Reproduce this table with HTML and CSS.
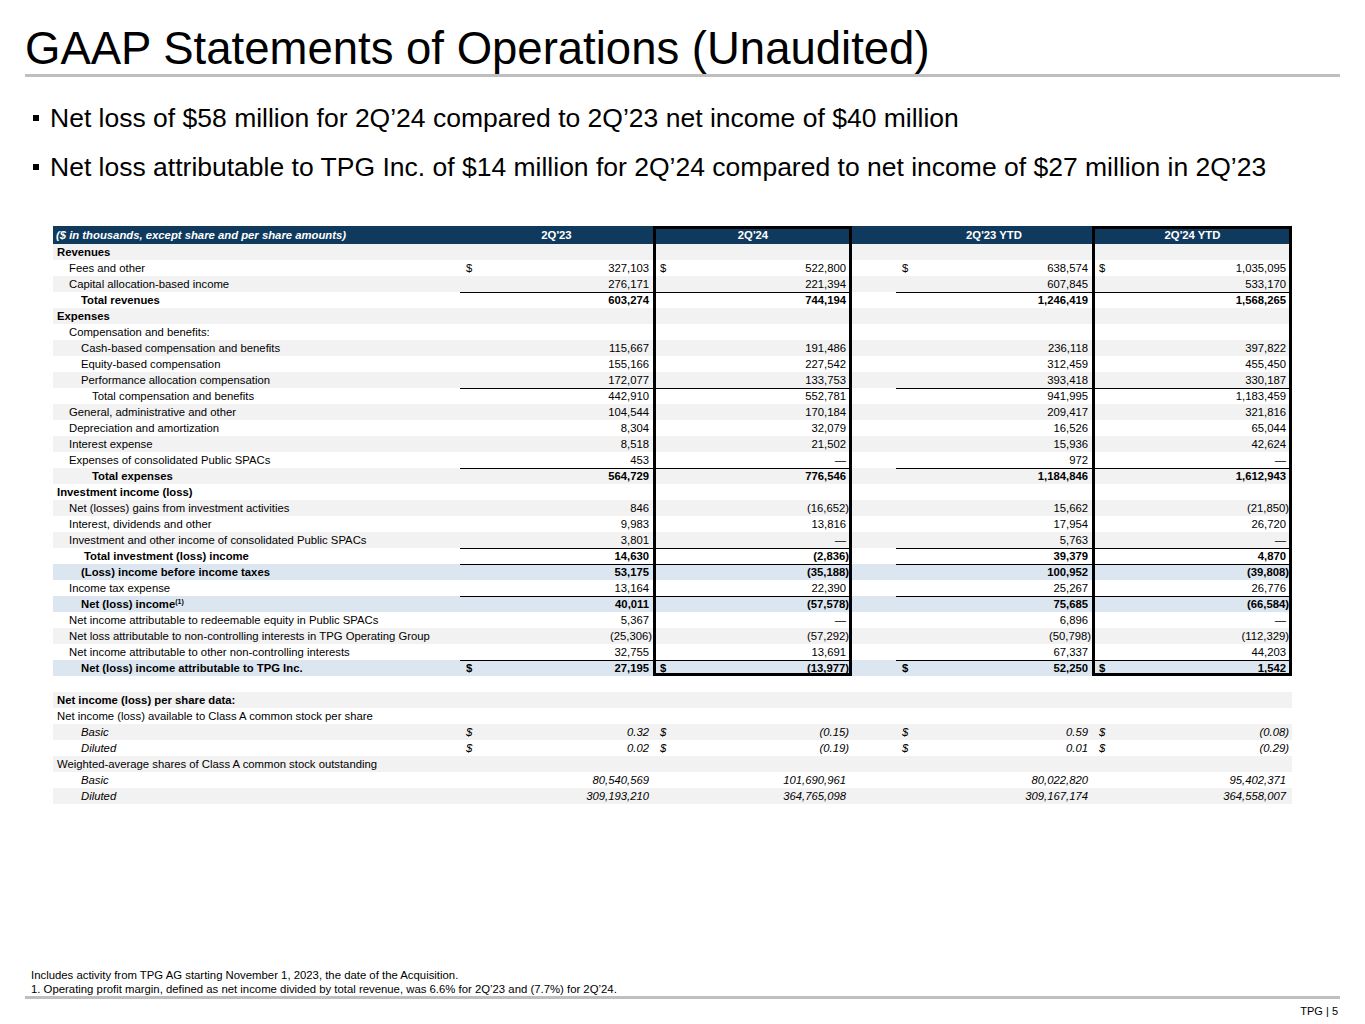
FILE: index.html
```html
<!DOCTYPE html>
<html lang="en">
<head>
<meta charset="utf-8">
<title>GAAP Statements of Operations (Unaudited)</title>
<link rel="stylesheet" href="styles.css">
</head>
<body>
<div class="slide">
  <h1 class="title">GAAP Statements of Operations (Unaudited)</h1>
  <div class="rule"></div>
  <ul class="bullets">
    <li>Net loss of $58 million for 2Q’24 compared to 2Q’23 net income of $40 million</li>
    <li>Net loss attributable to TPG Inc. of $14 million for 2Q’24 compared to net income of $27 million in 2Q’23</li>
  </ul>

  <table class="fin">
    <colgroup>
      <col class="w-label"><col class="w-c1"><col class="w-box"><col class="w-gap"><col class="w-c3"><col class="w-box2">
    </colgroup>
    <thead>
      <tr class="hd">
        <th class="hl">($ in thousands, except share and per share amounts)</th>
        <th class="hv">2Q'23</th>
        <th class="hv k">2Q'24</th>
        <th class="hv"></th>
        <th class="hv">2Q'23 YTD</th>
        <th class="hv k">2Q'24 YTD</th>
      </tr>
    </thead>
    <tbody>
      <tr class="g"><td class="l i0 b">Revenues</td><td class="v"></td><td class="v k"></td><td></td><td class="v"></td><td class="v k"></td></tr>
      <tr><td class="l i1">Fees and other</td><td class="v"><span class="c">$</span>327,103</td><td class="v k"><span class="c">$</span>522,800</td><td></td><td class="v"><span class="c">$</span>638,574</td><td class="v k"><span class="c">$</span>1,035,095</td></tr>
      <tr class="g"><td class="l i1">Capital allocation-based income</td><td class="v">276,171</td><td class="v k">221,394</td><td></td><td class="v">607,845</td><td class="v k">533,170</td></tr>
      <tr class="r b"><td class="l i2">Total revenues</td><td class="v">603,274</td><td class="v k">744,194</td><td></td><td class="v">1,246,419</td><td class="v k">1,568,265</td></tr>
      <tr class="g"><td class="l i0 b">Expenses</td><td class="v"></td><td class="v k"></td><td></td><td class="v"></td><td class="v k"></td></tr>
      <tr><td class="l i1">Compensation and benefits:</td><td class="v"></td><td class="v k"></td><td></td><td class="v"></td><td class="v k"></td></tr>
      <tr class="g"><td class="l i2">Cash-based compensation and benefits</td><td class="v">115,667</td><td class="v k">191,486</td><td></td><td class="v">236,118</td><td class="v k">397,822</td></tr>
      <tr><td class="l i2">Equity-based compensation</td><td class="v">155,166</td><td class="v k">227,542</td><td></td><td class="v">312,459</td><td class="v k">455,450</td></tr>
      <tr class="g"><td class="l i2">Performance allocation compensation</td><td class="v">172,077</td><td class="v k">133,753</td><td></td><td class="v">393,418</td><td class="v k">330,187</td></tr>
      <tr class="r"><td class="l i3">Total compensation and benefits</td><td class="v">442,910</td><td class="v k">552,781</td><td></td><td class="v">941,995</td><td class="v k">1,183,459</td></tr>
      <tr class="g"><td class="l i1">General, administrative and other</td><td class="v">104,544</td><td class="v k">170,184</td><td></td><td class="v">209,417</td><td class="v k">321,816</td></tr>
      <tr><td class="l i1">Depreciation and amortization</td><td class="v">8,304</td><td class="v k">32,079</td><td></td><td class="v">16,526</td><td class="v k">65,044</td></tr>
      <tr class="g"><td class="l i1">Interest expense</td><td class="v">8,518</td><td class="v k">21,502</td><td></td><td class="v">15,936</td><td class="v k">42,624</td></tr>
      <tr><td class="l i1">Expenses of consolidated Public SPACs</td><td class="v">453</td><td class="v k">—</td><td></td><td class="v">972</td><td class="v k">—</td></tr>
      <tr class="g r b"><td class="l i3">Total expenses</td><td class="v">564,729</td><td class="v k">776,546</td><td></td><td class="v">1,184,846</td><td class="v k">1,612,943</td></tr>
      <tr><td class="l i0 b">Investment income (loss)</td><td class="v"></td><td class="v k"></td><td></td><td class="v"></td><td class="v k"></td></tr>
      <tr class="g"><td class="l i1">Net (losses) gains from investment activities</td><td class="v">846</td><td class="v k"><span class="n">(16,652)</span></td><td></td><td class="v">15,662</td><td class="v k"><span class="n">(21,850)</span></td></tr>
      <tr><td class="l i1">Interest, dividends and other</td><td class="v">9,983</td><td class="v k">13,816</td><td></td><td class="v">17,954</td><td class="v k">26,720</td></tr>
      <tr class="g"><td class="l i1">Investment and other income of consolidated Public SPACs</td><td class="v">3,801</td><td class="v k">—</td><td></td><td class="v">5,763</td><td class="v k">—</td></tr>
      <tr class="r b"><td class="l i2b">Total investment (loss) income</td><td class="v">14,630</td><td class="v k"><span class="n">(2,836)</span></td><td></td><td class="v">39,379</td><td class="v k">4,870</td></tr>
      <tr class="hi r b"><td class="l i2">(Loss) income before income taxes</td><td class="v">53,175</td><td class="v k"><span class="n">(35,188)</span></td><td></td><td class="v">100,952</td><td class="v k"><span class="n">(39,808)</span></td></tr>
      <tr><td class="l i1">Income tax expense</td><td class="v">13,164</td><td class="v k">22,390</td><td></td><td class="v">25,267</td><td class="v k">26,776</td></tr>
      <tr class="hi r b"><td class="l i2">Net (loss) income<sup class="fn">(1)</sup></td><td class="v">40,011</td><td class="v k"><span class="n">(57,578)</span></td><td></td><td class="v">75,685</td><td class="v k"><span class="n">(66,584)</span></td></tr>
      <tr><td class="l i1">Net income attributable to redeemable equity in Public SPACs</td><td class="v">5,367</td><td class="v k">—</td><td></td><td class="v">6,896</td><td class="v k">—</td></tr>
      <tr class="g"><td class="l i1">Net loss attributable to non-controlling interests in TPG Operating Group</td><td class="v"><span class="n">(25,306)</span></td><td class="v k"><span class="n">(57,292)</span></td><td></td><td class="v"><span class="n">(50,798)</span></td><td class="v k"><span class="n">(112,329)</span></td></tr>
      <tr><td class="l i1">Net income attributable to other non-controlling interests</td><td class="v">32,755</td><td class="v k">13,691</td><td></td><td class="v">67,337</td><td class="v k">44,203</td></tr>
      <tr class="hi r b last"><td class="l i2">Net (loss) income attributable to TPG Inc.</td><td class="v"><span class="c">$</span>27,195</td><td class="v k"><span class="c">$</span><span class="n">(13,977)</span></td><td></td><td class="v"><span class="c">$</span>52,250</td><td class="v k"><span class="c">$</span>1,542</td></tr>
      <tr><td class="l"></td><td class="v"></td><td class="v q"></td><td></td><td class="v"></td><td class="v q"></td></tr>
      <tr class="g"><td class="l i0 b">Net income (loss) per share data:</td><td class="v"></td><td class="v q"></td><td></td><td class="v"></td><td class="v q"></td></tr>
      <tr><td class="l i0">Net income (loss) available to Class A common stock per share</td><td class="v"></td><td class="v q"></td><td></td><td class="v"></td><td class="v q"></td></tr>
      <tr class="g it"><td class="l i2">Basic</td><td class="v"><span class="c">$</span>0.32</td><td class="v q"><span class="c">$</span><span class="n">(0.15)</span></td><td></td><td class="v"><span class="c">$</span>0.59</td><td class="v q"><span class="c">$</span><span class="n">(0.08)</span></td></tr>
      <tr class="it"><td class="l i2">Diluted</td><td class="v"><span class="c">$</span>0.02</td><td class="v q"><span class="c">$</span><span class="n">(0.19)</span></td><td></td><td class="v"><span class="c">$</span>0.01</td><td class="v q"><span class="c">$</span><span class="n">(0.29)</span></td></tr>
      <tr class="g"><td class="l i0">Weighted-average shares of Class A common stock outstanding</td><td class="v"></td><td class="v q"></td><td></td><td class="v"></td><td class="v q"></td></tr>
      <tr class="it"><td class="l i2">Basic</td><td class="v">80,540,569</td><td class="v q">101,690,961</td><td></td><td class="v">80,022,820</td><td class="v q">95,402,371</td></tr>
      <tr class="g it"><td class="l i2">Diluted</td><td class="v">309,193,210</td><td class="v q">364,765,098</td><td></td><td class="v">309,167,174</td><td class="v q">364,558,007</td></tr>
    </tbody>
  </table>

  <div class="foot">
    <p class="notes">Includes activity from TPG AG starting November 1, 2023, the date of the Acquisition.<br>1. Operating profit margin, defined as net income divided by total revenue, was 6.6% for 2Q’23 and (7.7%) for 2Q’24.</p>
    <div class="rule"></div>
    <div class="page">TPG | 5</div>
  </div>
</div>
</body>
</html>
```

FILE: styles.css
```css
* { box-sizing: border-box; }
html, body { margin: 0; padding: 0; background: #fff; }
body { font-family: "Liberation Sans", Arial, sans-serif; color: #000; }

.slide {
  width: 1365px;
  height: 1024px;
  display: flex;
  flex-direction: column;
  overflow: hidden;
}

.title {
  margin: 0;
  padding: 24px 0 0 25px;
  font-size: 45.5px;
  font-weight: 400;
  line-height: 50px;
}

.rule {
  height: 3px;
  background: #bfbfbf;
  margin: 0 25px;
}

.bullets {
  list-style: none;
  margin: 17px 0 0 0;
  padding: 0 0 0 33px;
  font-size: 26.5px;
  line-height: 49px;
}
.bullets li::before {
  content: "";
  display: inline-block;
  width: 6px;
  height: 6px;
  background: #000;
  margin-right: 11px;
  vertical-align: 6px;
}

/* ---------- table ---------- */
.fin {
  margin: 34px 0 0 53px;
  border-collapse: separate;
  border-spacing: 0;
  table-layout: fixed;
  width: 1239px;
  font-size: 11.3px;
}
.w-label { width: 407px; }
.w-c1 { width: 193px; }
.w-box { width: 199px; }
.w-gap { width: 44px; }
.w-c3 { width: 196px; }
.w-box2 { width: 200px; }

.fin td, .fin th {
  padding: 0;
  height: 16px;
  line-height: 16px;
  white-space: nowrap;
  --t: 0 0 0 transparent;
  --bt: 0 0 0 transparent;
}

.hd { background: #0f3a5e; color: #fff; }
.hd th { height: 17px; line-height: 17px; font-weight: 700; padding-top: 1px; }
.hd .hl { text-align: left; font-style: italic; padding-left: 3px; }
.hd .hv { text-align: center; }
.hd .k { --t: inset 0 3px 0 #000; }

tr.g { background: #f2f2f2; }
tr.hi { background: #dce6f1; }
tr.b td, .fin td.b { font-weight: 700; }
tr.it td { font-style: italic; }

.l { text-align: left; }
.i0 { padding-left: 4px !important; }
.i1 { padding-left: 16px !important; }
.i2 { padding-left: 28px !important; }
.i2b { padding-left: 31px !important; }
.i3 { padding-left: 39px !important; }

.fin .v {
  text-align: right;
  padding-left: 6px;
  padding-right: 4px;
  box-shadow: var(--t), var(--bt);
}
.fin .k, .fin .q { padding-left: 7px; padding-right: 6px; }
.fin .k {
  box-shadow: inset 3px 0 0 #000, inset -3px 0 0 #000, var(--t), var(--bt);
}
tr.r .v { --t: inset 0 1px 0 #000; }
tr.last .k { --bt: inset 0 -3px 0 #000; }

.c { float: left; }
.n { margin-right: -3px; }

.fn {
  font-size: 7px;
  line-height: 0;
  vertical-align: 4px;
}

/* ---------- footer ---------- */
.foot {
  margin-top: auto;
  padding-bottom: 6px;
}
.notes {
  margin: 0;
  padding-left: 31px;
  font-size: 11.35px;
  line-height: 14px;
}
.page {
  margin-top: 5px;
  padding-right: 27px;
  text-align: right;
  font-size: 11px;
  line-height: 14px;
}
```
